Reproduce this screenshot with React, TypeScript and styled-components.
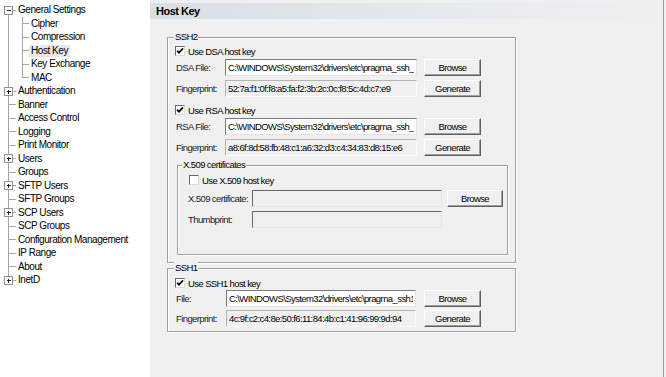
import styled, { createGlobalStyle } from "styled-components";

const UI_FONT = `"Liberation Sans", Arial, sans-serif`;
const LINE = "#a6a6a6";

const GlobalStyle = createGlobalStyle`
  html, body {
    margin: 0;
    padding: 0;
  }
  body {
    width: 666px;
    height: 377px;
    overflow: hidden;
    background: #f0f0f0;
  }
  * {
    box-sizing: border-box;
  }
`;

type TreeNode = {
  label: string;
  level: 0 | 1;
  box?: "plus" | "minus";
  first?: boolean;
  last?: boolean;
  selected?: boolean;
};

const treeNodes: TreeNode[] = [
  { label: "General Settings", level: 0, box: "minus", first: true },
  { label: "Cipher", level: 1 },
  { label: "Compression", level: 1 },
  { label: "Host Key", level: 1, selected: true },
  { label: "Key Exchange", level: 1 },
  { label: "MAC", level: 1, last: true },
  { label: "Authentication", level: 0, box: "plus" },
  { label: "Banner", level: 0 },
  { label: "Access Control", level: 0 },
  { label: "Logging", level: 0 },
  { label: "Print Monitor", level: 0 },
  { label: "Users", level: 0, box: "plus" },
  { label: "Groups", level: 0 },
  { label: "SFTP Users", level: 0, box: "plus" },
  { label: "SFTP Groups", level: 0 },
  { label: "SCP Users", level: 0, box: "plus" },
  { label: "SCP Groups", level: 0 },
  { label: "Configuration Management", level: 0 },
  { label: "IP Range", level: 0 },
  { label: "About", level: 0 },
  { label: "InetD", level: 0, box: "plus", last: true },
];

const Window = styled.div`
  display: flex;
  width: 666px;
  height: 377px;
  background: #f0f0f0;
`;

const TreePane = styled.div`
  width: 150px;
  flex: none;
  background: #ffffff;
  padding-top: 3.5px;
`;

const TreeRow = styled.div`
  display: flex;
  align-items: center;
  height: 13.5px;
`;

const TreeLabel = styled.span<{ $selected?: boolean }>`
  height: 12px;
  line-height: 12px;
  padding: 0 2px;
  font-family: ${UI_FONT};
  font-size: 10px;
  letter-spacing: -0.45px;
  color: #000;
  white-space: nowrap;
  background: ${(p) => (p.$selected ? "#e9e9e9" : "transparent")};
`;

const TreeLines = ({ node }: { node: TreeNode }) => {
  const w = node.level === 0 ? 16 : 29;
  const mid = 6.5;
  const stubX = node.level === 0 ? 8.5 : 22.5;
  return (
    <svg width={w} height={13.5} shapeRendering="crispEdges" style={{ flex: "none" }}>
      {node.level === 0 ? (
        <line x1={8.5} x2={8.5} y1={node.first ? mid : 0} y2={node.last ? mid : 13.5} stroke={LINE} />
      ) : (
        <>
          <line x1={8.5} x2={8.5} y1={0} y2={13.5} stroke={LINE} />
          <line x1={22.5} x2={22.5} y1={0} y2={node.last ? mid : 13.5} stroke={LINE} />
        </>
      )}
      <line x1={stubX} x2={w} y1={mid} y2={mid} stroke={LINE} />
      {node.box && (
        <g>
          <rect x={4.5} y={2.5} width={8} height={8} fill="#fff" stroke="#919191" />
          <line x1={6.5} x2={11} y1={6.5} y2={6.5} stroke="#222" />
          {node.box === "plus" && <line x1={8.5} x2={8.5} y1={4.5} y2={9} stroke="#222" />}
        </g>
      )}
    </svg>
  );
};

const Main = styled.div`
  flex: 1;
  margin-right: 2px;
  border-right: 1px solid #9a9a9a;
  display: flex;
  flex-direction: column;
`;

const Header = styled.div`
  margin-top: 3px;
  height: 16px;
  line-height: 16px;
  padding-left: 6px;
  font-family: ${UI_FONT};
  font-weight: bold;
  font-size: 11px;
  letter-spacing: -0.5px;
  color: #000;
  background: linear-gradient(to right, #d9dfe6 0%, #e6e9ed 55%, #f0f0f0 100%);
`;

const Group = styled.div<{ $width: number; $mt: number; $ml: number; $pad: string }>`
  position: relative;
  width: ${(p) => p.$width}px;
  margin-top: ${(p) => p.$mt}px;
  margin-left: ${(p) => p.$ml}px;
  padding: ${(p) => p.$pad};
  border: 1px solid #a0a0a0;
  box-shadow: inset 1px 1px 0 #fff, 1px 1px 0 #fff;
  display: flex;
  flex-direction: column;
`;

const controlText = `
  font-family: ${UI_FONT};
  font-size: 9.5px;
  letter-spacing: -0.6px;
  color: #000;
`;

const Caption = styled.span<{ $left: number }>`
  position: absolute;
  top: -7px;
  left: ${(p) => p.$left}px;
  padding: 0 1px;
  height: 12px;
  line-height: 12px;
  background: #f0f0f0;
  ${controlText}
`;

const CheckRow = styled.label<{ $mt?: number; $indent?: number }>`
  display: flex;
  align-items: center;
  gap: 3px;
  height: 14px;
  margin-top: ${(p) => p.$mt ?? 0}px;
  padding-left: ${(p) => p.$indent ?? 0}px;
  white-space: nowrap;
  ${controlText}
`;

const CheckBox = styled.span`
  width: 10px;
  height: 10px;
  flex: none;
  display: flex;
  align-items: center;
  justify-content: center;
  background: #fff;
  border: 1px solid;
  border-color: #6a6a6a #dcdcdc #dcdcdc #6a6a6a;
`;

const FieldRow = styled.div<{ $mt?: number }>`
  display: flex;
  align-items: center;
  height: 17px;
  margin-top: ${(p) => p.$mt ?? 0}px;
`;

const FieldLabel = styled.span<{ $width: number }>`
  width: ${(p) => p.$width}px;
  flex: none;
  padding-left: 1px;
  white-space: nowrap;
  ${controlText}
  color: #1a1a1a;
`;

const TextBox = styled.input<{ $width: number; $kind: "edit" | "readonly" | "disabled" }>`
  width: ${(p) => p.$width}px;
  height: 17px;
  flex: none;
  margin: 0;
  padding: 0 2px;
  outline: none;
  ${controlText}
  border: 1px solid;
  background: ${(p) => (p.$kind === "edit" ? "#fff" : "#f0f0f0")};
  border-color: ${(p) =>
    p.$kind === "edit"
      ? "#7a7a7a #e3e3e3 #e3e3e3 #7a7a7a"
      : p.$kind === "readonly"
      ? "#b4b4b4 #fbfbfb #fbfbfb #b4b4b4"
      : "#6a6a6a #e6e6e6 #e6e6e6 #6a6a6a"};
`;

const Button = styled.button<{ $width: number; $ml: number }>`
  width: ${(p) => p.$width}px;
  height: 17px;
  flex: none;
  margin: 0 0 0 ${(p) => p.$ml}px;
  padding: 0;
  ${controlText}
  background: #f0f0f0;
  border: 1px solid;
  border-color: #fff #5f5f5f #5f5f5f #fff;
  box-shadow: inset -1px -1px 0 #a0a0a0;
`;

const Check = ({ checked }: { checked: boolean }) => (
  <CheckBox>
    {checked && (
      <svg width={8} height={8} viewBox="0 0 8 8">
        <path d="M1 3.6 L3 5.7 L7 1.4" fill="none" stroke="#000" strokeWidth={1.7} />
      </svg>
    )}
  </CheckBox>
);

type KeyBlockProps = {
  checkLabel: string;
  fileLabel: string;
  path: string;
  fingerprint: string;
  labelWidth: number;
  inputWidth: number;
  checkTop?: number;
  fileTop: number;
  rowGap: number;
};

const KeyBlock = ({
  checkLabel,
  fileLabel,
  path,
  fingerprint,
  labelWidth,
  inputWidth,
  checkTop,
  fileTop,
  rowGap,
}: KeyBlockProps) => (
  <>
    <CheckRow $mt={checkTop}>
      <Check checked />
      {checkLabel}
    </CheckRow>
    <FieldRow $mt={fileTop}>
      <FieldLabel $width={labelWidth}>{fileLabel}</FieldLabel>
      <TextBox $width={inputWidth} $kind="edit" readOnly value={path} />
      <Button $width={57} $ml={424 - 225 - inputWidth - labelWidth + 50}>
        Browse
      </Button>
    </FieldRow>
    <FieldRow $mt={rowGap}>
      <FieldLabel $width={labelWidth}>Fingerprint:</FieldLabel>
      <TextBox $width={inputWidth} $kind="readonly" readOnly value={fingerprint} />
      <Button $width={57} $ml={424 - 225 - inputWidth - labelWidth + 50}>
        Generate
      </Button>
    </FieldRow>
  </>
);

const App = () => (
  <Window>
    <GlobalStyle />
    <TreePane>
      {treeNodes.map((node) => (
        <TreeRow key={node.label}>
          <TreeLines node={node} />
          <TreeLabel $selected={node.selected}>{node.label}</TreeLabel>
        </TreeRow>
      ))}
    </TreePane>

    <Main>
      <Header>Host Key</Header>

      <Group $width={349} $mt={18} $ml={17} $pad="6px 6px 7px 7px">
        <Caption $left={6}>SSH2</Caption>
        <KeyBlock
          checkLabel="Use DSA host key"
          fileLabel="DSA File:"
          path="C:\WINDOWS\System32\drivers\etc\pragma_ssh_host_dsa_key"
          fingerprint="52:7a:f1:0f:f8:a5:fa:f2:3b:2c:0c:f8:5c:4d:c7:e9"
          labelWidth={50}
          inputWidth={192}
          fileTop={1}
          rowGap={4}
        />
        <KeyBlock
          checkLabel="Use RSA host key"
          fileLabel="RSA File:"
          path="C:\WINDOWS\System32\drivers\etc\pragma_ssh_rsa_key"
          fingerprint="a8:6f:8d:58:fb:48:c1:a6:32:d3:c4:34:83:d8:15:e6"
          labelWidth={50}
          inputWidth={192}
          checkTop={6}
          fileTop={1}
          rowGap={4}
        />

        <Group $width={331} $mt={9} $ml={2} $pad="7px 0 26px 9px">
          <Caption $left={4}>X.509 certificates</Caption>
          <CheckRow $indent={2}>
            <Check checked={false} />
            Use X.509 host key
          </CheckRow>
          <FieldRow $mt={3}>
            <FieldLabel $width={65}>X.509 certificate:</FieldLabel>
            <TextBox $width={190} $kind="disabled" readOnly value="" />
            <Button $width={56} $ml={5}>
              Browse
            </Button>
          </FieldRow>
          <FieldRow $mt={4}>
            <FieldLabel $width={65}>Thumbprint:</FieldLabel>
            <TextBox $width={190} $kind="disabled" readOnly value="" />
          </FieldRow>
        </Group>
      </Group>

      <Group $width={349} $mt={5} $ml={17} $pad="7px 6px 4px 7px">
        <Caption $left={6}>SSH1</Caption>
        <KeyBlock
          checkLabel="Use SSH1 host key"
          fileLabel="File:"
          path="C:\WINDOWS\System32\drivers\etc\pragma_ssh1_host_key"
          fingerprint="4c:9f:c2:c4:8e:50:f6:11:84:4b:c1:41:96:99:9d:94"
          labelWidth={51}
          inputWidth={190}
          fileTop={0}
          rowGap={3}
        />
      </Group>
    </Main>
  </Window>
);

export default App;
